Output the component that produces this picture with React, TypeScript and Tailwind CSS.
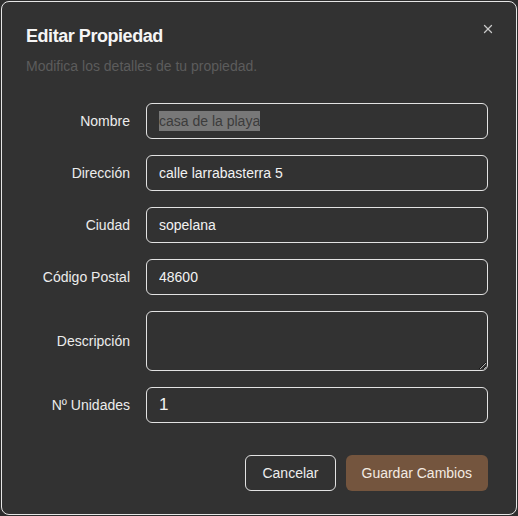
import { X } from "lucide-react";

const fields = [
  { label: "Dirección", value: "calle larrabasterra 5" },
  { label: "Ciudad", value: "sopelana" },
  { label: "Código Postal", value: "48600" },
];

const boxCls =
  "h-9 w-full rounded-md border border-[#e2e2e2] bg-[#323232] px-3 text-[#f2f2f2] outline-none";

export default function App() {
  return (
    <div
      className="h-[516px] w-[518px] bg-[#2e2e2e] p-px"
      style={{ fontFamily: '"Liberation Sans", Arial, sans-serif' }}
    >
      <div className="relative flex h-full flex-col rounded-lg border border-[#e6e6e6] bg-[#323232] pl-6 pr-[28px] pt-5">
        <button className="absolute right-[21px] top-[20px] text-[#c8c8c8]">
          <X className="h-3.5 w-3.5" strokeWidth={2.2} />
        </button>

        <div className="flex flex-col gap-1.5">
          <h2 className="text-lg font-bold leading-7 tracking-tight text-[#f5f5f5]">Editar Propiedad</h2>
          <p className="text-sm leading-5 text-[#5c5c5c]">Modifica los detalles de tu propiedad.</p>
        </div>

        <div className="mt-[27px] grid grid-cols-[104px_1fr] items-center gap-x-4 gap-y-4">
          <label className="text-right text-sm text-[#ececec]">Nombre</label>
          <div className={boxCls + " flex items-center text-sm"}>
            <span className="bg-[#787878] text-[#3c3c3c]">casa de la playa</span>
          </div>

          {fields.map((f) => (
            <>
              <label key={f.label} className="text-right text-sm text-[#ececec]">
                {f.label}
              </label>
              <input key={f.label + "-i"} className={boxCls + " text-sm"} defaultValue={f.value} />
            </>
          ))}

          <label className="text-right text-sm text-[#ececec]">Descripción</label>
          <textarea className="h-[60px] w-full rounded-md border border-[#e2e2e2] bg-[#323232] px-3 py-2 text-sm text-[#f2f2f2] outline-none" />

          <label className="text-right text-sm text-[#ececec]">Nº Unidades</label>
          <input className={boxCls + " text-[17px]"} defaultValue="1" />
        </div>

        <div className="mt-8 flex justify-end gap-2.5">
          <button className="h-9 rounded-md border border-[#e2e2e2] bg-[#323232] px-4 text-sm text-[#ededed]">
            Cancelar
          </button>
          <button className="h-9 rounded-md bg-[#74553e] px-4 text-sm text-[#f3ebe3]">
            Guardar Cambios
          </button>
        </div>
      </div>
    </div>
  );
}
